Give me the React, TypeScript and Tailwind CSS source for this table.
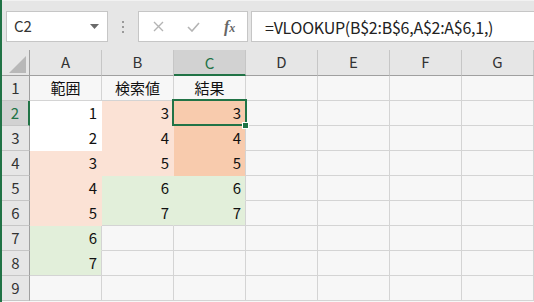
import React from "react";

type Fill = "none" | "white" | "peach" | "orange" | "green";

const fillBg: Record<Fill, string> = {
  none: "bg-[#f7f7f7]",
  white: "bg-white",
  peach: "bg-[#fbe2d5]",
  orange: "bg-[#f8cbad]",
  green: "bg-[#e2efda]",
};

const rightLine: Record<Fill, string> = {
  none: "border-r-[#d4d4d4]",
  white: "border-r-white",
  peach: "border-r-[#fbe2d5]",
  orange: "border-r-[#f8cbad]",
  green: "border-r-[#e2efda]",
};

const bottomLine: Record<Fill, string> = {
  none: "border-b-[#d4d4d4]",
  white: "border-b-white",
  peach: "border-b-[#fbe2d5]",
  orange: "border-b-[#f8cbad]",
  green: "border-b-[#e2efda]",
};

const columns = ["A", "B", "C", "D", "E", "F", "G"];

type Cell = { v?: string; fill?: Fill; center?: boolean };

const rows: Cell[][] = [
  [{ v: "範囲", center: true }, { v: "検索値", center: true }, { v: "結果", center: true }],
  [{ v: "1", fill: "white" }, { v: "3", fill: "peach" }, { v: "3", fill: "orange" }],
  [{ v: "2", fill: "white" }, { v: "4", fill: "peach" }, { v: "4", fill: "orange" }],
  [{ v: "3", fill: "peach" }, { v: "5", fill: "peach" }, { v: "5", fill: "orange" }],
  [{ v: "4", fill: "peach" }, { v: "6", fill: "green" }, { v: "6", fill: "green" }],
  [{ v: "5", fill: "peach" }, { v: "7", fill: "green" }, { v: "7", fill: "green" }],
  [{ v: "6", fill: "green" }],
  [{ v: "7", fill: "green" }],
  [],
];

const fillAt = (i: number, j: number): Fill => rows[i]?.[j]?.fill ?? "none";

const font = "font-['Yu_Gothic_UI','Noto_Sans_CJK_JP',sans-serif]";

function FormulaBar() {
  return (
    <div className="flex h-[50px] items-start border-t border-[#f2f2f2] bg-[#e6e6e6] pt-[10px]">
      <div className="ml-[4px] flex h-[31px] w-[102px] items-center justify-between border border-[#c6c6c6] bg-white pl-[7px] pr-[8px]">
        <span className="text-[15px] text-[#333]">C2</span>
        <svg width="9" height="5" viewBox="0 0 9 5">
          <path d="M0 0h9L4.5 5z" fill="#6a6a6a" />
        </svg>
      </div>
      <div className="ml-[14px] mt-[10px] flex flex-col gap-[3px]">
        <span className="h-[2px] w-[2px] bg-[#9a9a9a]" />
        <span className="h-[2px] w-[2px] bg-[#9a9a9a]" />
        <span className="h-[2px] w-[2px] bg-[#9a9a9a]" />
      </div>
      <div className="ml-[14px] flex h-[31px] w-[110px] items-center border border-[#c6c6c6] bg-white">
        <svg className="ml-[14px]" width="11" height="11" viewBox="0 0 11 11">
          <path d="M1 1l9 9M10 1l-9 9" stroke="#b4b4b4" strokeWidth="1.4" />
        </svg>
        <svg className="ml-[23px]" width="13" height="10" viewBox="0 0 13 10">
          <path d="M1 5l4 4 7-8" stroke="#b4b4b4" strokeWidth="1.6" fill="none" />
        </svg>
        <span className="ml-[24px] font-['Liberation_Serif',serif] text-[16px] font-bold italic text-[#666]">
          f<span className="text-[12px]">x</span>
        </span>
      </div>
      <div className="ml-[3px] flex h-[31px] flex-1 items-center border-y border-l border-[#c6c6c6] bg-white pl-[13px]">
        <span className="text-[16px] tracking-[-0.25px] text-[#222]">=VLOOKUP(B$2:B$6,A$2:A$6,1,)</span>
      </div>
    </div>
  );
}

function HeaderRow() {
  return (
    <div className="flex h-[26px]">
      <div className="relative w-[28px] border-b border-r border-[#a0a0a0] bg-[#e6e6e6]">
        <svg className="absolute left-[7px] top-[6px]" width="17" height="17" viewBox="0 0 17 17">
          <path d="M17 0v17H0z" fill="#b8b8b8" />
        </svg>
      </div>
      {columns.map((c) => {
        const on = c === "C";
        return (
          <div
            key={c}
            className={
              on
                ? "flex w-[72px] items-center justify-center border-b-2 border-r border-b-[#217346] border-r-[#c6c6c6] bg-[#d2d2d2] pt-[2px] text-[15px] text-[#217346]"
                : "flex w-[72px] items-center justify-center border-b border-r border-b-[#a0a0a0] border-r-[#c6c6c6] bg-[#e6e6e6] text-[15px] text-[#333]"
            }
          >
            {c}
          </div>
        );
      })}
    </div>
  );
}

export default function App() {
  return (
    <div className={`h-[302px] w-[534px] overflow-hidden border-l-2 border-[#217346] bg-[#f7f7f7] ${font}`}>
      <FormulaBar />
      <HeaderRow />
      {rows.map((r, i) => {
        const sel = i === 1;
        return (
          <div key={i} className="flex h-[25px]">
            <div
              className={
                sel
                  ? "flex w-[28px] items-center justify-center border-b border-r-2 border-b-[#c6c6c6] border-r-[#217346] bg-[#d2d2d2] text-[15px] text-[#217346]"
                  : "flex w-[28px] items-center justify-center border-b border-r border-b-[#c6c6c6] border-r-[#a0a0a0] bg-[#e6e6e6] text-[15px] text-[#333]"
              }
            >
              {i + 1}
            </div>
            {columns.map((c, j) => {
              const cell = r[j] ?? {};
              const fill = cell.fill ?? "none";
              // gridline stays grey unless the neighbour shares a fill
              const rFill = fill !== "none" && fillAt(i, j + 1) !== "none" ? fill : "none";
              const bFill = fill !== "none" && fillAt(i + 1, j) !== "none" ? fill : "none";
              return (
                <div
                  key={c}
                  className={`relative flex w-[72px] items-center border-b border-r pr-[4px] text-[15px] text-[#111] ${fillBg[fill]} ${rightLine[rFill]} ${bottomLine[bFill]} ${cell.center ? "justify-center pl-[4px]" : "justify-end"}`}
                >
                  {cell.v}
                  {sel && j === 2 && (
                    <>
                      <div className="absolute -left-[2px] -top-[2px] z-10 h-[27px] w-[75px] border-2 border-[#217346]" />
                      <div className="absolute -bottom-[4px] -right-[4px] z-10 h-[7px] w-[7px] border border-white bg-[#217346]" />
                    </>
                  )}
                </div>
              );
            })}
          </div>
        );
      })}
    </div>
  );
}
